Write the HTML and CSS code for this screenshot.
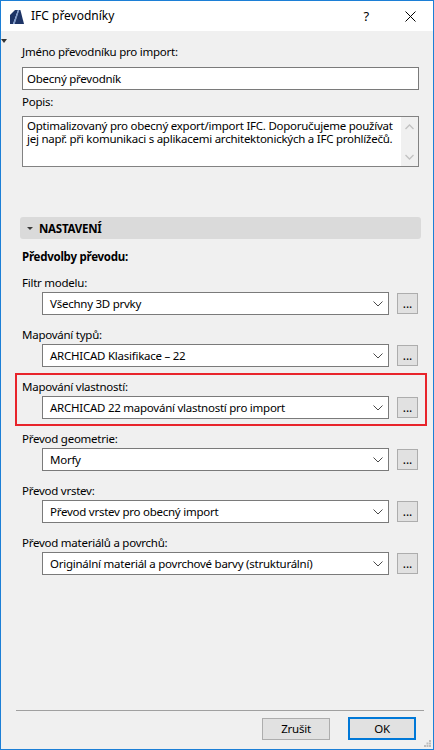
FILE: index.html
```html
<!DOCTYPE html>
<html lang="cs">
<head>
<meta charset="utf-8">
<title>IFC převodníky</title>
<link rel="stylesheet" href="styles.css">
</head>
<body>
<div class="window">
  <div class="titlebar">
    <svg class="logo" width="15" height="14" viewBox="0 0 15 14">
      <polygon points="0,14 0,5 5,0 8,0 3,14" fill="#1d3466"/>
      <polygon points="3,14 8,0 9.2,0 4.6,14" fill="#7c9bd0"/>
      <polygon points="4.6,14 9.2,0 10.4,0 14,14" fill="#1d3466"/>
    </svg>
    <span class="title">IFC převodníky</span>
    <span class="help">?</span>
    <svg class="close" width="11" height="11" viewBox="0 0 11 11">
      <path d="M0.5 0.5 L10.5 10.5 M10.5 0.5 L0.5 10.5" stroke="#000" stroke-width="1" fill="none"/>
    </svg>
  </div>
  <div class="body">
    <span class="side-tri"></span>
    <div class="label l-name">Jméno převodníku pro import:</div>
    <div class="input">Obecný převodník</div>
    <div class="label l-desc">Popis:</div>
    <div class="textarea">
      <div class="ta-text">Optimalizovaný pro obecný export/import IFC. Doporučujeme používat jej např. při komunikaci s aplikacemi architektonických a IFC prohlížečů.</div>
      <div class="ta-scroll">
        <svg width="9" height="6" viewBox="0 0 9 6"><path d="M0.5 5 L4.5 1 L8.5 5" stroke="#c2c2c2" stroke-width="1.3" fill="none"/></svg>
        <svg width="9" height="6" viewBox="0 0 9 6"><path d="M0.5 1 L4.5 5 L8.5 1" stroke="#c2c2c2" stroke-width="1.3" fill="none"/></svg>
      </div>
    </div>
    <div class="section">
      <span class="sec-tri"></span>
      <span class="sec-title">NASTAVENÍ</span>
    </div>
    <div class="label bold l-pre">Předvolby převodu:</div>

    <div class="row">
      <div class="label">Filtr modelu:</div>
      <div class="ctrl">
        <div class="select"><span>Všechny 3D prvky</span><svg class="chev" width="10" height="6" viewBox="0 0 10 6"><path d="M0.5 0.5 L5 5 L9.5 0.5" stroke="#4a4a4a" stroke-width="1" fill="none"/></svg></div>
        <div class="dots">...</div>
      </div>
    </div>
    <div class="row">
      <div class="label">Mapování typů:</div>
      <div class="ctrl">
        <div class="select"><span>ARCHICAD Klasifikace – 22</span><svg class="chev" width="10" height="6" viewBox="0 0 10 6"><path d="M0.5 0.5 L5 5 L9.5 0.5" stroke="#4a4a4a" stroke-width="1" fill="none"/></svg></div>
        <div class="dots">...</div>
      </div>
    </div>
    <div class="row highlight">
      <div class="label">Mapování vlastností:</div>
      <div class="ctrl">
        <div class="select"><span>ARCHICAD 22 mapování vlastností pro import</span><svg class="chev" width="10" height="6" viewBox="0 0 10 6"><path d="M0.5 0.5 L5 5 L9.5 0.5" stroke="#4a4a4a" stroke-width="1" fill="none"/></svg></div>
        <div class="dots">...</div>
      </div>
    </div>
    <div class="row">
      <div class="label">Převod geometrie:</div>
      <div class="ctrl">
        <div class="select"><span>Morfy</span><svg class="chev" width="10" height="6" viewBox="0 0 10 6"><path d="M0.5 0.5 L5 5 L9.5 0.5" stroke="#4a4a4a" stroke-width="1" fill="none"/></svg></div>
        <div class="dots">...</div>
      </div>
    </div>
    <div class="row">
      <div class="label">Převod vrstev:</div>
      <div class="ctrl">
        <div class="select"><span>Převod vrstev pro obecný import</span><svg class="chev" width="10" height="6" viewBox="0 0 10 6"><path d="M0.5 0.5 L5 5 L9.5 0.5" stroke="#4a4a4a" stroke-width="1" fill="none"/></svg></div>
        <div class="dots">...</div>
      </div>
    </div>
    <div class="row">
      <div class="label">Převod materiálů a povrchů:</div>
      <div class="ctrl">
        <div class="select"><span>Originální materiál a povrchové barvy (strukturální)</span><svg class="chev" width="10" height="6" viewBox="0 0 10 6"><path d="M0.5 0.5 L5 5 L9.5 0.5" stroke="#4a4a4a" stroke-width="1" fill="none"/></svg></div>
        <div class="dots">...</div>
      </div>
    </div>

    <div class="footer">
      <div class="sep"></div>
      <div class="buttons">
        <div class="btn">Zrušit</div>
        <div class="btn default">OK</div>
      </div>
    </div>
    <svg class="grip" width="7" height="7" viewBox="0 0 7 7">
      <rect x="5" y="0" width="2" height="2" fill="#bdbdbd"/>
      <rect x="2.5" y="2.5" width="2" height="2" fill="#bdbdbd"/>
      <rect x="5" y="2.5" width="2" height="2" fill="#bdbdbd"/>
      <rect x="0" y="5" width="2" height="2" fill="#bdbdbd"/>
      <rect x="2.5" y="5" width="2" height="2" fill="#bdbdbd"/>
      <rect x="5" y="5" width="2" height="2" fill="#bdbdbd"/>
    </svg>
  </div>
</div>
</body>
</html>
```
FILE: styles.css
```css
* { box-sizing: border-box; }
html, body { margin: 0; padding: 0; }
body {
  font-family: "Noto Sans", "Open Sans", sans-serif;
  font-size: 11.5px;
  letter-spacing: -0.25px;
  color: #000;
  background: #f0f0f0;
}
.window {
  width: 434px;
  height: 750px;
  border: 1px solid #1c7fd6;
  display: flex;
  flex-direction: column;
  background: #f0f0f0;
}
.titlebar {
  height: 30px;
  background: #fff;
  display: flex;
  align-items: center;
  flex: none;
}
.logo { margin-left: 9px; margin-top: 1px; }
.title { margin-left: 6px; font-size: 12px; letter-spacing: 0; line-height: 16px; }
.help { margin-left: auto; font-size: 13px; margin-right: 36px; }
.close { margin-right: 17px; }

.body {
  flex: 1;
  position: relative;
  display: flex;
  flex-direction: column;
  padding: 0 0 0 21px;
}
.side-tri {
  position: absolute;
  left: 0;
  top: 8px;
  width: 0; height: 0;
  border-left: 3.5px solid transparent;
  border-right: 3.5px solid transparent;
  border-top: 4px solid #333;
}
.label { line-height: 16px; height: 16px; white-space: nowrap; }
.bold { font-weight: bold; }
.l-name { margin-top: 13px; }
.input {
  margin-top: 7px;
  width: 397px;
  height: 23px;
  border: 1px solid #7a7a7a;
  background: #fff;
  padding: 0 0 0 4px;
  line-height: 21px;
}
.l-desc { margin-top: 4px; }
.textarea {
  margin-top: 6px;
  width: 397px;
  height: 51px;
  border: 1px solid #828282;
  background: #fff;
  display: flex;
}
.ta-text {
  flex: 1;
  padding: 2px 0 0 4px;
  line-height: 13.3px;
}
.ta-scroll {
  width: 17px;
  background: #f0f0f0;
  display: flex;
  flex-direction: column;
  justify-content: space-between;
  align-items: center;
  padding: 7px 0 6px;
}
.section {
  margin-top: 50px;
  margin-left: -2px;
  width: 401px;
  height: 22px;
  background: #dadada;
  border-radius: 3px;
  display: flex;
  align-items: center;
}
.sec-tri {
  margin-left: 7px;
  width: 0; height: 0;
  border-left: 3.5px solid transparent;
  border-right: 3.5px solid transparent;
  border-top: 3.5px solid #3a3a3a;
}
.sec-title { margin-left: 6px; font-weight: bold; }
.l-pre { margin-top: 10px; }
.row {
  position: relative;
  margin-top: 10px;
  height: 42px;
}
.row + .row { margin-top: 10px; }
.highlight::after {
  content: "";
  position: absolute;
  left: -7px;
  top: -6px;
  width: 408px;
  height: 49px;
  border: 2px solid #e8242b;
}
.ctrl {
  margin-top: 1px;
  display: flex;
  gap: 8px;
  align-items: center;
}
.select {
  margin-left: 20px;
  width: 347px;
  height: 23px;
  border: 1px solid #7a7a7a;
  background: #fff;
  display: flex;
  align-items: center;
  padding: 0 0 0 7px;
  white-space: nowrap;
}
.select span { flex: 1; line-height: 21px; }
.chev { margin-right: 5px; }
.dots {
  width: 21px;
  height: 21px;
  background: #e1e1e1;
  border: 1px solid #adadad;
  text-align: center;
  line-height: 19px;
  font-size: 12px;
  letter-spacing: 0;
}
.footer {
  margin-top: auto;
  margin-left: -6px;
}
.sep {
  width: 408px;
  height: 1px;
  background: #a0a0a0;
}
.buttons {
  display: flex;
  justify-content: flex-end;
  gap: 18px;
  padding: 6px 17px 9px 0;
  align-items: center;
}
.btn {
  width: 68px;
  height: 22px;
  background: #e1e1e1;
  border: 1px solid #adadad;
  text-align: center;
  line-height: 20px;
}
.btn.default {
  height: 23px;
  border: 2px solid #0078d7;
  line-height: 19px;
}
.grip {
  position: absolute;
  right: 2px;
  bottom: 2px;
}
```
